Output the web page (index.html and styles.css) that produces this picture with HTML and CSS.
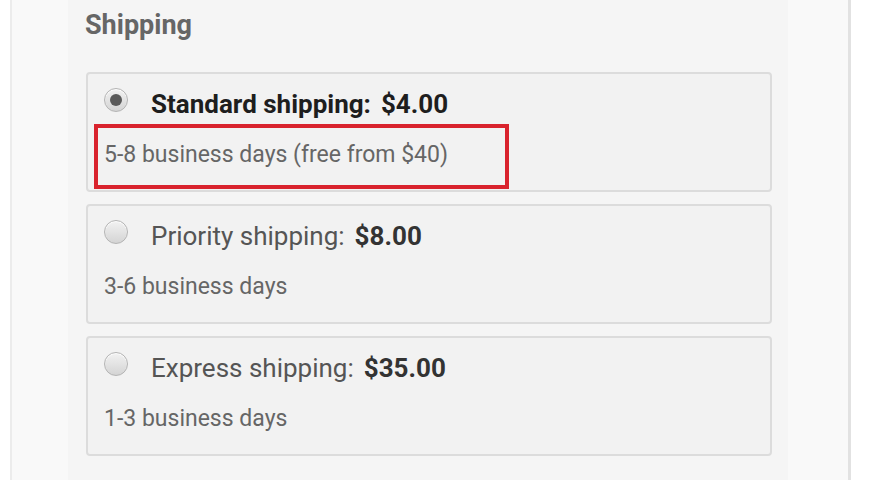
FILE: index.html
```html
<!DOCTYPE html>
<html lang="en">
<head>
    <meta charset="UTF-8">
    <meta name="viewport" content="width=device-width, initial-scale=1.0">
    <title>Shipping</title>
    <link rel="stylesheet" href="styles.css">
</head>
<body>
    <div class="page">
        <div class="panel">
            <h2>Shipping</h2>

            <label class="option">
                <span class="option-head">
                    <input type="radio" name="shipping" checked>
                    <span class="name selected">Standard shipping:</span>
                    <span class="price">$4.00</span>
                </span>
                <span class="days">5-8 business days (free from $40)</span>
                <span class="highlight"></span>
            </label>

            <label class="option">
                <span class="option-head">
                    <input type="radio" name="shipping">
                    <span class="name">Priority shipping:</span>
                    <span class="price">$8.00</span>
                </span>
                <span class="days">3-6 business days</span>
            </label>

            <label class="option">
                <span class="option-head">
                    <input type="radio" name="shipping">
                    <span class="name">Express shipping:</span>
                    <span class="price">$35.00</span>
                </span>
                <span class="days">1-3 business days</span>
            </label>
        </div>
    </div>
</body>
</html>
```

FILE: styles.css
```css
body {
    margin: 0;
    background-color: #ffffff;
    font-family: Roboto, "Liberation Sans", Arial, sans-serif;
    overflow: hidden;
}
.page {
    margin-left: 10px;
    width: 841px;
    height: 480px;
    box-sizing: border-box;
    background-color: #f9f9f9;
    border-left: 2px solid #ececec;
    border-right: 3px solid #e2e2e2;
    padding: 0 60px 0 56px;
}
.panel {
    background-color: #f5f5f5;
    height: 100%;
    padding: 8px 16px 0 18px;
    box-sizing: border-box;
}
h2 {
    margin: 0 0 30px -1px;
    font-size: 27px;
    line-height: 34px;
    font-weight: bold;
    color: #666;
}
.option {
    position: relative;
    display: block;
    height: 120px;
    box-sizing: border-box;
    margin-bottom: 12px;
    padding: 12px 18px 0 16px;
    background-color: #f2f2f2;
    border: 2px solid #dcdcdc;
    border-radius: 4px;
}
.option-head {
    display: flex;
    align-items: center;
    height: 36px;
}
input[type="radio"] {
    appearance: none;
    -webkit-appearance: none;
    margin: 0 23px 0 0;
    width: 24px;
    height: 24px;
    border-radius: 50%;
    border: 1px solid #b4b4b4;
    background: linear-gradient(#f2f2f2, #d4d4d4);
    box-shadow: inset 0 1px 1px #fff;
    box-sizing: border-box;
    position: relative;
    top: -4px;
}
input[type="radio"]:checked::after {
    content: "";
    position: absolute;
    left: 5px;
    top: 5px;
    width: 12px;
    height: 12px;
    border-radius: 50%;
    background-color: #5a5a5a;
}
.name {
    font-size: 26px;
    color: #555;
}
.name.selected {
    font-weight: bold;
    color: #1e1e1e;
}
.price {
    margin-left: 10px;
    font-size: 26px;
    font-weight: bold;
    color: #333;
}
.selected + .price {
    color: #1e1e1e;
}
.days {
    display: block;
    margin-top: 19px;
    font-size: 23px;
    color: #666;
}
.highlight {
    position: absolute;
    left: 6px;
    top: 50px;
    width: 415px;
    height: 65px;
    box-sizing: border-box;
    border: 4px solid #d9232d;
}
```
